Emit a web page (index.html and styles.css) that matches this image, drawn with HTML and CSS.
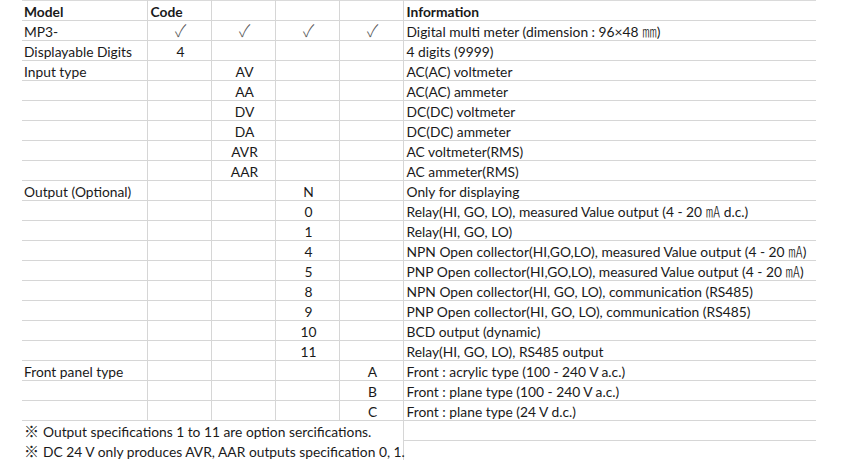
FILE: index.html
```html
<!DOCTYPE html>
<html>
<head>
<meta charset="utf-8">
<link rel="stylesheet" href="styles.css">
</head>
<body>
<table class="sheet">
  <colgroup>
    <col class="c-model"><col class="c-code"><col class="c-code"><col class="c-code"><col class="c-code"><col class="c-info">
  </colgroup>
  <tr class="head"><td>Model</td><td class="l">Code</td><td></td><td></td><td></td><td>Information</td></tr>
  <tr><td>MP3-</td><td><span class="ck">✓</span></td><td><span class="ck">✓</span></td><td><span class="ck">✓</span></td><td><span class="ck">✓</span></td><td>Digital multi meter (dimension : 96×48 <span class="cjk">㎜</span>)</td></tr>
  <tr><td>Displayable Digits</td><td>4</td><td></td><td></td><td></td><td>4 digits (9999)</td></tr>
  <tr><td>Input type</td><td></td><td>AV</td><td></td><td></td><td>AC(AC) voltmeter</td></tr>
  <tr><td></td><td></td><td>AA</td><td></td><td></td><td>AC(AC) ammeter</td></tr>
  <tr><td></td><td></td><td>DV</td><td></td><td></td><td>DC(DC) voltmeter</td></tr>
  <tr><td></td><td></td><td>DA</td><td></td><td></td><td>DC(DC) ammeter</td></tr>
  <tr><td></td><td></td><td>AVR</td><td></td><td></td><td>AC voltmeter(RMS)</td></tr>
  <tr><td></td><td></td><td>AAR</td><td></td><td></td><td>AC ammeter(RMS)</td></tr>
  <tr><td>Output (Optional)</td><td></td><td></td><td>N</td><td></td><td>Only for displaying</td></tr>
  <tr><td></td><td></td><td></td><td>0</td><td></td><td>Relay(HI, GO, LO), measured Value output (4 - 20 <span class="cjk">㎃</span> d.c.)</td></tr>
  <tr><td></td><td></td><td></td><td>1</td><td></td><td>Relay(HI, GO, LO)</td></tr>
  <tr><td></td><td></td><td></td><td>4</td><td></td><td>NPN Open collector(HI,GO,LO), measured Value output (4 - 20 <span class="cjk">㎃</span>)</td></tr>
  <tr><td></td><td></td><td></td><td>5</td><td></td><td>PNP Open collector(HI,GO,LO), measured Value output (4 - 20 <span class="cjk">㎃</span>)</td></tr>
  <tr><td></td><td></td><td></td><td>8</td><td></td><td>NPN Open collector(HI, GO, LO), communication (RS485)</td></tr>
  <tr><td></td><td></td><td></td><td>9</td><td></td><td>PNP Open collector(HI, GO, LO), communication (RS485)</td></tr>
  <tr><td></td><td></td><td></td><td>10</td><td></td><td>BCD output (dynamic)</td></tr>
  <tr><td></td><td></td><td></td><td>11</td><td></td><td>Relay(HI, GO, LO), RS485 output</td></tr>
  <tr><td>Front panel type</td><td></td><td></td><td></td><td>A</td><td>Front : acrylic type (100 - 240 V a.c.)</td></tr>
  <tr><td></td><td></td><td></td><td></td><td>B</td><td>Front : plane type (100 - 240 V a.c.)</td></tr>
  <tr><td></td><td></td><td></td><td></td><td>C</td><td>Front : plane type (24 V d.c.)</td></tr>
  <tr class="note first"><td colspan="5"><span class="mark">※</span>Output specifications 1 to 11 are option sercifications.</td><td></td></tr>
  <tr class="note"><td colspan="5"><span class="mark">※</span>DC 24 V only produces AVR, AAR outputs specification 0, 1.</td><td></td></tr>
</table>
</body>
</html>
```
FILE: styles.css
```css
html, body {
  margin: 0;
  padding: 0;
  background: #ffffff;
}
body {
  width: 850px;
  height: 460px;
  overflow: hidden;
  font-family: Lato, "Noto Sans CJK KR", sans-serif;
  font-size: 13.8px;
  color: #1a1a1a;
}
.sheet {
  margin-left: 22px;
  border-collapse: collapse;
  table-layout: fixed;
  width: 794px;
  border-top: 1px solid #dadada;
}
.sheet tr { height: 20px; }
.c-model { width: 125px; }
.c-code { width: 64px; }
.c-info { width: 413px; }
.sheet td {
  height: 19px;
  padding: 2px 0 0 3px;
  border-bottom: 1px solid #d6d6d6;
  white-space: nowrap;
  overflow: visible;
  line-height: 17px;
  text-align: center;
  box-sizing: border-box;
}
.sheet td:first-child,
.sheet td:last-child {
  text-align: left;
  padding-left: 2px;
}
.sheet td:last-child { padding-left: 3px; }
.sheet td + td { border-left: 1px solid #d6d6d6; }
.head td { font-weight: bold; }
.head td.l { text-align: left; }
.ck {
  font-family: "Noto Sans CJK KR", sans-serif;
  color: #5c5c5c;
  font-size: 17px;
  font-weight: 300;
  line-height: 1px;
}
.cjk {
  font-family: "Noto Sans CJK KR", sans-serif;
  font-size: 14.5px;
  font-weight: 300;
  line-height: 1px;
}
.mark {
  font-family: "Noto Sans CJK KR", sans-serif;
  font-size: 15px;
  font-weight: 500;
  color: #222;
  display: inline-block;
  width: 19px;
  line-height: 1px;
}
.note td:first-child {
  border-bottom: none;
}
.note td:last-child { border-left: 1px solid #d6d6d6; }
```
